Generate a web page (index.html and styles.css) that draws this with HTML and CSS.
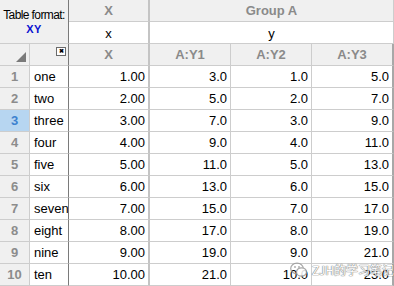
FILE: index.html
```html
<!DOCTYPE html>
<html>
<head>
<meta charset="utf-8">
<link rel="stylesheet" href="styles.css">
</head>
<body>
<div class="sheet">
  <div class="cell tf">
    <span class="tf-label">Table format:</span>
    <span class="tf-xy">XY</span>
  </div>
  <div class="cell hdr col-x r1">X</div>
  <div class="cell hdr group r1">Group A</div>
  <div class="cell sub col-x r2">x</div>
  <div class="cell sub group r2">y</div>

  <div class="cell corner r3"><span class="tri"></span></div>
  <div class="cell namehdr r3"><span class="xbtn">&#x2716;</span></div>
  <div class="cell hdr col-x r3">X</div>
  <div class="cell hdr r3">A:Y1</div>
  <div class="cell hdr r3">A:Y2</div>
  <div class="cell hdr r3 last">A:Y3</div>

  <div class="cell num">1</div><div class="cell name">one</div><div class="cell val col-x">1.00</div><div class="cell val">3.0</div><div class="cell val">1.0</div><div class="cell val last">5.0</div>
  <div class="cell num">2</div><div class="cell name">two</div><div class="cell val col-x">2.00</div><div class="cell val">5.0</div><div class="cell val">2.0</div><div class="cell val last">7.0</div>
  <div class="cell num sel">3</div><div class="cell name">three</div><div class="cell val col-x">3.00</div><div class="cell val">7.0</div><div class="cell val">3.0</div><div class="cell val last">9.0</div>
  <div class="cell num">4</div><div class="cell name">four</div><div class="cell val col-x">4.00</div><div class="cell val">9.0</div><div class="cell val">4.0</div><div class="cell val last">11.0</div>
  <div class="cell num">5</div><div class="cell name">five</div><div class="cell val col-x">5.00</div><div class="cell val">11.0</div><div class="cell val">5.0</div><div class="cell val last">13.0</div>
  <div class="cell num">6</div><div class="cell name">six</div><div class="cell val col-x">6.00</div><div class="cell val">13.0</div><div class="cell val">6.0</div><div class="cell val last">15.0</div>
  <div class="cell num">7</div><div class="cell name">seven</div><div class="cell val col-x">7.00</div><div class="cell val">15.0</div><div class="cell val">7.0</div><div class="cell val last">17.0</div>
  <div class="cell num">8</div><div class="cell name">eight</div><div class="cell val col-x">8.00</div><div class="cell val">17.0</div><div class="cell val">8.0</div><div class="cell val last">19.0</div>
  <div class="cell num">9</div><div class="cell name">nine</div><div class="cell val col-x">9.00</div><div class="cell val">19.0</div><div class="cell val">9.0</div><div class="cell val last">21.0</div>
  <div class="cell num">10</div><div class="cell name">ten</div><div class="cell val col-x">10.00</div><div class="cell val">21.0</div><div class="cell val">10.0</div><div class="cell val last">23.0</div>
</div>
<div class="watermark">
  <svg class="wm-icon" width="18" height="16" viewBox="0 0 18 16">
    <ellipse cx="7" cy="6.5" rx="6.3" ry="5.3" fill="none" stroke="#9a9a9a" stroke-width="1.2"/>
    <ellipse cx="11.5" cy="10" rx="5" ry="4.2" fill="#ffffff" stroke="#9a9a9a" stroke-width="1.2"/>
    <circle cx="5" cy="5" r="0.9" fill="#9a9a9a"/>
    <circle cx="9" cy="5" r="0.9" fill="#9a9a9a"/>
  </svg>
  <span class="wm-text">ZJH的学习笔记</span>
</div>
</body>
</html>
```
FILE: styles.css
```css
html, body {
  margin: 0;
  padding: 0;
  background: #ffffff;
}
body {
  width: 394px;
  height: 286px;
  overflow: hidden;
  position: relative;
  font-family: "Liberation Sans", Arial, sans-serif;
}
.sheet {
  display: grid;
  grid-template-columns: 30px 39px 81px 81px 81px 82px;
  grid-auto-rows: 22px;
  width: 394px;
}
.cell {
  box-sizing: border-box;
  border-right: 1px solid #cdcdcd;
  border-bottom: 1px solid #cdcdcd;
  display: flex;
  align-items: center;
  overflow: hidden;
  white-space: nowrap;
  font-size: 13px;
  color: #000;
}
.tf {
  grid-column: 1 / 3;
  grid-row: 1 / 3;
  background: #f0f0f0;
  border-right: 1px solid #7a7a7a;
  flex-direction: column;
  justify-content: flex-start;
  align-items: center;
  padding-top: 9px;
}
.tf-label {
  font-size: 12px;
  letter-spacing: -0.6px;
  line-height: 13px;
  color: #000;
}
.tf-xy {
  font-size: 11px;
  font-weight: bold;
  color: #0a10d0;
  line-height: 12px;
  margin-top: 1px;
  letter-spacing: 0.3px;
}
.hdr {
  background: #f0f0f0;
  color: #8a8a8a;
  font-weight: bold;
  justify-content: center;
}
.group {
  grid-column: 4 / 7;
}
.r1 { grid-row: 1; }
.r2 { grid-row: 2; }
.r3 { grid-row: 3; }
.sub {
  background: #ffffff;
  justify-content: center;
  padding-top: 1px;
}
.col-x {
  border-right: 2px solid #c4c4c4;
}
.last {
  border-right: 2px solid #a8a8a8;
}
.corner {
  grid-column: 1;
  background: #f0f0f0;
  position: relative;
}
.tri {
  position: absolute;
  right: 3px;
  bottom: 3px;
  width: 0;
  height: 0;
  border-left: 10px solid transparent;
  border-bottom: 10px solid #7a7a7a;
}
.namehdr {
  grid-column: 2;
  background: #f0f0f0;
  border-right: 1px solid #7a7a7a;
  align-items: flex-start;
  justify-content: flex-end;
  padding: 3px 2px 0 0;
}
.xbtn {
  box-sizing: border-box;
  width: 10px;
  height: 9px;
  border: 1px solid #6a6a6a;
  background: #ffffff;
  font-size: 6px;
  line-height: 7px;
  text-align: center;
  font-weight: bold;
  color: #000;
}
.num {
  background: #f0f0f0;
  color: #8c8c8c;
  font-weight: bold;
  justify-content: center;
}
.num.sel {
  background: #b7d6f1;
  color: #3d82cf;
}
.name {
  border-right: 1px solid #7a7a7a;
  padding-left: 4px;
}
.val {
  justify-content: flex-end;
  padding-right: 3px;
}
.watermark {
  position: absolute;
  left: 290px;
  top: 262px;
  display: flex;
  align-items: center;
  gap: 4px;
  opacity: 0.85;
}
.wm-text {
  font-family: "Noto Sans CJK SC", sans-serif;
  font-size: 12px;
  line-height: 16px;
  color: #ffffff;
  text-shadow: 0 0 1px #707070, 0 0 1px #707070, 0 0 1px #707070;
}
```
